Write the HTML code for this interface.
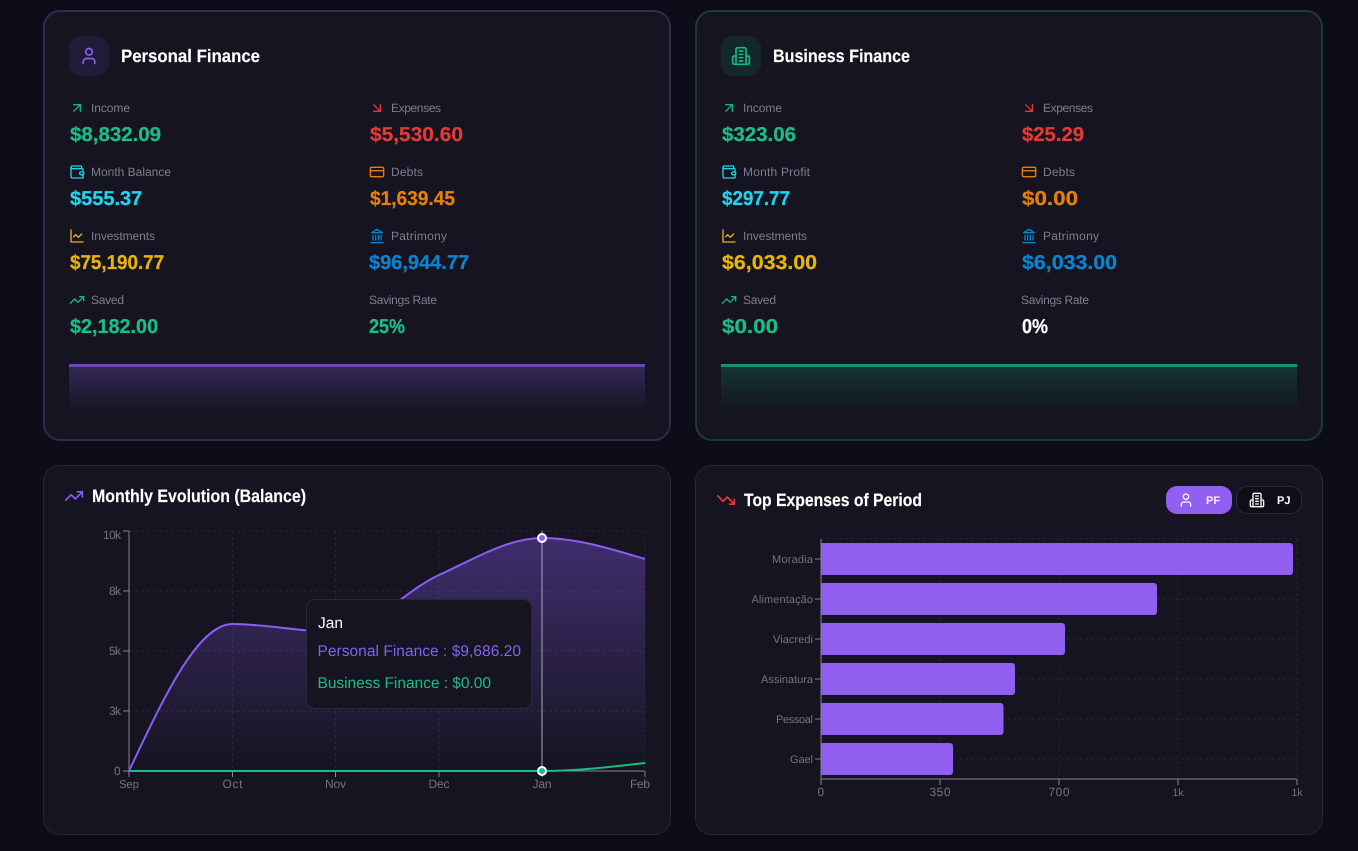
<!DOCTYPE html>
<html lang="en"><head><meta charset="utf-8"><title>Finance Dashboard</title>
<style>
html,body{margin:0;padding:0;background:#0e0c18;width:1358px;height:851px;overflow:hidden}
svg{display:block}
text{font-family:"Liberation Sans",sans-serif;text-rendering:geometricPrecision}
.t{font-size:18px;font-weight:700;fill:#fff;stroke:#fff;stroke-width:.15px}
.l{font-size:12px;fill:#7f7e90}
.v{font-size:20px;font-weight:700;stroke-width:.25px}
.a{font-size:12px;fill:#74737f}
.b{font-size:11px;fill:#74737f}
.i{fill:none;stroke-width:2;stroke-linecap:round;stroke-linejoin:round}
.g{stroke:#262533;stroke-width:1;stroke-dasharray:3 3;fill:none}
.x{stroke:#85848f;stroke-width:1;fill:none}
</style></head><body>
<svg xmlns="http://www.w3.org/2000/svg" width="1358" height="851" viewBox="0 0 1358 851">
<defs>
<linearGradient id="gp" x1="0" y1="0" x2="0" y2="1"><stop offset="0" stop-color="#8b5cf6" stop-opacity=".26"/><stop offset="1" stop-color="#8b5cf6" stop-opacity="0"/></linearGradient>
<linearGradient id="gg" x1="0" y1="0" x2="0" y2="1"><stop offset="0" stop-color="#10b981" stop-opacity=".2"/><stop offset="1" stop-color="#10b981" stop-opacity="0"/></linearGradient>
<linearGradient id="ga" gradientUnits="userSpaceOnUse" x1="0" y1="538" x2="0" y2="771"><stop offset="0" stop-color="#8b5cf6" stop-opacity=".36"/><stop offset="1" stop-color="#8b5cf6" stop-opacity="0"/></linearGradient>
</defs>
<rect width="1358" height="851" fill="#0e0c18"/>

<!-- Personal card -->
<rect x="44" y="11" width="626" height="429" rx="16" fill="#151420" stroke="#32294e" stroke-width="2"/>
<rect x="69" y="36" width="40" height="40" rx="12" fill="#221b37"/>
<svg x="79" y="46" width="20" height="20" viewBox="0 0 24 24" class="i" stroke="#8b5cf6"><path d="M19 21v-2a4 4 0 0 0-4-4H9a4 4 0 0 0-4 4v2"/><circle cx="12" cy="7" r="4"/></svg>
<text class="t" x="121" y="62" textLength="139" lengthAdjust="spacingAndGlyphs">Personal Finance</text>

<svg x="69" y="100" width="16" height="16" viewBox="0 0 24 24" class="i" stroke="#10b981"><path d="M7 7h10v10"/><path d="M7 17 17 7"/></svg>
<text class="l" x="91" y="112" textLength="39">Income</text>
<text class="v" transform="translate(70 141) scale(1.023 1)" fill="#1cbd84" stroke="#1cbd84">$8,832.09</text>
<svg x="369" y="100" width="16" height="16" viewBox="0 0 24 24" class="i" stroke="#e53935"><path d="m7 7 10 10"/><path d="M17 7v10H7"/></svg>
<text class="l" x="391" y="112" textLength="50">Expenses</text>
<text class="v" transform="translate(370 141) scale(1.045 1)" fill="#e53935" stroke="#e53935">$5,530.60</text>

<svg x="69" y="164" width="16" height="16" viewBox="0 0 24 24" class="i" stroke="#22d3ee"><path d="M19 7V4a1 1 0 0 0-1-1H5a2 2 0 0 0 0 4h15a1 1 0 0 1 1 1v4h-3a2 2 0 0 0 0 4h3a1 1 0 0 0 1-1v-2a1 1 0 0 0-1-1"/><path d="M3 5v14a2 2 0 0 0 2 2h15a1 1 0 0 0 1-1v-4"/></svg>
<text class="l" x="91" y="176" textLength="80">Month Balance</text>
<text class="v" transform="translate(70 205)" fill="#22d3ee" stroke="#22d3ee">$555.37</text>
<svg x="369" y="164" width="16" height="16" viewBox="0 0 24 24" class="i" stroke="#e67e0c"><rect x="2" y="5" width="20" height="14" rx="2"/><line x1="2" y1="10" x2="22" y2="10"/></svg>
<text class="l" x="391" y="176" textLength="32">Debts</text>
<text class="v" transform="translate(370 205) scale(.955 1)" fill="#e67e0c" stroke="#e67e0c">$1,639.45</text>

<svg x="69" y="228" width="16" height="16" viewBox="0 0 24 24" class="i" stroke="#eab308"><path d="M3 3v18h18"/><path d="m19 9-5 5-4-4-3 3"/></svg>
<text class="l" x="91" y="240" textLength="64">Investments</text>
<text class="v" transform="translate(70 269) scale(.94 1)" fill="#eab308" stroke="#eab308">$75,190.77</text>
<svg x="369" y="228" width="16" height="16" viewBox="0 0 24 24" class="i" stroke="#0a84d0"><line x1="3" y1="22" x2="21" y2="22"/><line x1="6" y1="18" x2="6" y2="11"/><line x1="10" y1="18" x2="10" y2="11"/><line x1="14" y1="18" x2="14" y2="11"/><line x1="18" y1="18" x2="18" y2="11"/><polygon points="12 2 20 7 4 7"/></svg>
<text class="l" x="391" y="240" textLength="56">Patrimony</text>
<text class="v" transform="translate(369 269)" fill="#0a84d0" stroke="#0a84d0">$96,944.77</text>

<svg x="69" y="292" width="16" height="16" viewBox="0 0 24 24" class="i" stroke="#10b981"><polyline points="22 7 13.5 15.5 8.5 10.5 2 17"/><polyline points="16 7 22 7 22 13"/></svg>
<text class="l" x="91" y="304" textLength="33">Saved</text>
<text class="v" transform="translate(70 333) scale(.99 1)" fill="#1cbd84" stroke="#1cbd84">$2,182.00</text>
<text class="l" x="369" y="304" textLength="68">Savings Rate</text>
<text class="v" transform="translate(369 333) scale(.9 1)" fill="#1cbd84" stroke="#1cbd84">25%</text>

<rect x="69" y="367" width="576" height="46" fill="url(#gp)"/>
<rect x="69" y="364" width="576" height="3" fill="#6c47b5"/>

<!-- Business card -->
<rect x="696" y="11" width="626" height="429" rx="16" fill="#151420" stroke="#1b3b3a" stroke-width="2"/>
<rect x="721" y="36" width="40" height="40" rx="12" fill="#14282b"/>
<svg x="731" y="46" width="20" height="20" viewBox="0 0 24 24" class="i" stroke="#10b981"><path d="M6 22V4a2 2 0 0 1 2-2h8a2 2 0 0 1 2 2v18Z"/><path d="M6 12H4a2 2 0 0 0-2 2v6a2 2 0 0 0 2 2h2"/><path d="M18 12h2a2 2 0 0 1 2 2v6a2 2 0 0 1-2 2h-2"/><path d="M10 6h4"/><path d="M10 10h4"/><path d="M10 14h4"/><path d="M10 18h4"/></svg>
<text class="t" x="773" y="62" textLength="137" lengthAdjust="spacingAndGlyphs">Business Finance</text>

<svg x="721" y="100" width="16" height="16" viewBox="0 0 24 24" class="i" stroke="#10b981"><path d="M7 7h10v10"/><path d="M7 17 17 7"/></svg>
<text class="l" x="743" y="112" textLength="39">Income</text>
<text class="v" transform="translate(722 141) scale(1.024 1)" fill="#1cbd84" stroke="#1cbd84">$323.06</text>
<svg x="1021" y="100" width="16" height="16" viewBox="0 0 24 24" class="i" stroke="#e53935"><path d="m7 7 10 10"/><path d="M17 7v10H7"/></svg>
<text class="l" x="1043" y="112" textLength="50">Expenses</text>
<text class="v" transform="translate(1022 141) scale(1.014 1)" fill="#e53935" stroke="#e53935">$25.29</text>

<svg x="721" y="164" width="16" height="16" viewBox="0 0 24 24" class="i" stroke="#22d3ee"><path d="M19 7V4a1 1 0 0 0-1-1H5a2 2 0 0 0 0 4h15a1 1 0 0 1 1 1v4h-3a2 2 0 0 0 0 4h3a1 1 0 0 0 1-1v-2a1 1 0 0 0-1-1"/><path d="M3 5v14a2 2 0 0 0 2 2h15a1 1 0 0 0 1-1v-4"/></svg>
<text class="l" x="743" y="176" textLength="67">Month Profit</text>
<text class="v" transform="translate(722 205) scale(.94 1)" fill="#22d3ee" stroke="#22d3ee">$297.77</text>
<svg x="1021" y="164" width="16" height="16" viewBox="0 0 24 24" class="i" stroke="#e67e0c"><rect x="2" y="5" width="20" height="14" rx="2"/><line x1="2" y1="10" x2="22" y2="10"/></svg>
<text class="l" x="1043" y="176" textLength="32">Debts</text>
<text class="v" transform="translate(1022 205) scale(1.12 1)" fill="#e67e0c" stroke="#e67e0c">$0.00</text>

<svg x="721" y="228" width="16" height="16" viewBox="0 0 24 24" class="i" stroke="#eab308"><path d="M3 3v18h18"/><path d="m19 9-5 5-4-4-3 3"/></svg>
<text class="l" x="743" y="240" textLength="64">Investments</text>
<text class="v" transform="translate(722 269) scale(1.068 1)" fill="#eab308" stroke="#eab308">$6,033.00</text>
<svg x="1021" y="228" width="16" height="16" viewBox="0 0 24 24" class="i" stroke="#0a84d0"><line x1="3" y1="22" x2="21" y2="22"/><line x1="6" y1="18" x2="6" y2="11"/><line x1="10" y1="18" x2="10" y2="11"/><line x1="14" y1="18" x2="14" y2="11"/><line x1="18" y1="18" x2="18" y2="11"/><polygon points="12 2 20 7 4 7"/></svg>
<text class="l" x="1043" y="240" textLength="56">Patrimony</text>
<text class="v" transform="translate(1022 269) scale(1.068 1)" fill="#0a84d0" stroke="#0a84d0">$6,033.00</text>

<svg x="721" y="292" width="16" height="16" viewBox="0 0 24 24" class="i" stroke="#10b981"><polyline points="22 7 13.5 15.5 8.5 10.5 2 17"/><polyline points="16 7 22 7 22 13"/></svg>
<text class="l" x="743" y="304" textLength="33">Saved</text>
<text class="v" transform="translate(722 333) scale(1.12 1)" fill="#1cbd84" stroke="#1cbd84">$0.00</text>
<text class="l" x="1021" y="304" textLength="68">Savings Rate</text>
<text class="v" transform="translate(1022 333) scale(.9 1)" fill="#ffffff" stroke="#ffffff">0%</text>

<rect x="721" y="367" width="576" height="46" fill="url(#gg)"/>
<rect x="721" y="364" width="576" height="3" fill="#17936e"/>

<!-- Monthly evolution card -->
<rect x="43.5" y="465.5" width="627" height="369" rx="16" fill="#151420" stroke="#272634"/>
<svg x="64" y="486" width="20" height="20" viewBox="0 0 24 24" class="i" stroke="#8b5cf6"><polyline points="22 7 13.5 15.5 8.5 10.5 2 17"/><polyline points="16 7 22 7 22 13"/></svg>
<text class="t" x="92" y="502" textLength="214" lengthAdjust="spacingAndGlyphs">Monthly Evolution (Balance)</text>

<path class="g" d="M129 531H645M129 591H645M129 651H645M129 711H645M232.5 531V771M335.5 531V771M439 531V771M542 531V771M645 531V771"/>
<path d="M129 771C163.5 697.5 198 624 232.5 624C267 624 301 632 335.5 632C370 632 404.5 590.7 439 575C473.3 559.4 507.7 538 542 538C576.3 538 610.7 548.7 645 559V771H129Z" fill="url(#ga)"/>
<path class="x" d="M129 531V771M123 531H129M123 591H129M123 651H129M123 711H129M123 771H129M129 771H645M129 771V777M232.5 771V777M335.5 771V777M439 771V777M542 771V777M645 771V777"/>
<path d="M129 771C163.5 697.5 198 624 232.5 624C267 624 301 632 335.5 632C370 632 404.5 590.7 439 575C473.3 559.4 507.7 538 542 538C576.3 538 610.7 548.7 645 559" fill="none" stroke="#8b5cf6" stroke-width="2"/>
<path d="M129 771H542C576.3 771 610.7 767 645 763" fill="none" stroke="#1cbd84" stroke-width="2"/>
<line x1="542" y1="531" x2="542" y2="771" stroke="#a9a8b6" stroke-width="1"/>
<circle cx="542" cy="538" r="4" fill="#8b5cf6" stroke="#fff" stroke-width="2"/>
<circle cx="542" cy="771" r="4" fill="#1cbd84" stroke="#fff" stroke-width="2"/>

<text class="a" x="103" y="539" textLength="18">10k</text>
<text class="a" x="109" y="595" textLength="12">8k</text>
<text class="a" x="109" y="655" textLength="12">5k</text>
<text class="a" x="109" y="715" textLength="12">3k</text>
<text class="a" x="114" y="775">0</text>
<text class="a" x="119" y="788" font-size="11.5" style="font-size:11.5px" textLength="20">Sep</text>
<text class="a" x="222.5" y="788" textLength="20">Oct</text>
<text class="a" x="325" y="788" textLength="21">Nov</text>
<text class="a" x="428.5" y="788" textLength="21">Dec</text>
<text class="a" x="532.5" y="788" textLength="19">Jan</text>
<text class="a" x="630" y="788" textLength="20">Feb</text>

<rect x="306.5" y="599.5" width="225" height="109" rx="8" fill="#151420" stroke="#292838"/>
<text x="318" y="628" font-size="15.5" fill="#ffffff" textLength="25">Jan</text>
<text x="317.5" y="656" font-size="15.5" fill="#8562f5" textLength="203.5">Personal Finance : $9,686.20</text>
<text x="317.5" y="688" font-size="15.5" fill="#1cbd84" textLength="173.5">Business Finance : $0.00</text>

<!-- Top expenses card -->
<rect x="695.5" y="465.5" width="627" height="369" rx="16" fill="#151420" stroke="#272634"/>
<svg x="716" y="490" width="20" height="20" viewBox="0 0 24 24" class="i" stroke="#e53935"><polyline points="22 17 13.5 8.5 8.5 13.5 2 7"/><polyline points="16 17 22 17 22 11"/></svg>
<text class="t" x="744" y="506" textLength="178" lengthAdjust="spacingAndGlyphs">Top Expenses of Period</text>

<rect x="1166" y="486" width="66" height="28" rx="11" fill="#915ff0"/>
<svg x="1178" y="492" width="16" height="16" viewBox="0 0 24 24" class="i" stroke="#ffffff"><path d="M19 21v-2a4 4 0 0 0-4-4H9a4 4 0 0 0-4 4v2"/><circle cx="12" cy="7" r="4"/></svg>
<text x="1206" y="504" font-size="11" font-weight="700" fill="#f2eefe">PF</text>
<rect x="1236.5" y="486.5" width="65" height="27" rx="10.5" fill="#0f0e18" stroke="#2a2937"/>
<svg x="1249" y="492" width="16" height="16" viewBox="0 0 24 24" class="i" stroke="#ffffff"><path d="M6 22V4a2 2 0 0 1 2-2h8a2 2 0 0 1 2 2v18Z"/><path d="M6 12H4a2 2 0 0 0-2 2v6a2 2 0 0 0 2 2h2"/><path d="M18 12h2a2 2 0 0 1 2 2v6a2 2 0 0 1-2 2h-2"/><path d="M10 6h4"/><path d="M10 10h4"/><path d="M10 14h4"/><path d="M10 18h4"/></svg>
<text x="1277" y="504" font-size="11" font-weight="700" fill="#ffffff">PJ</text>

<path class="g" d="M821 539H1297M821 559H1297M821 599H1297M821 639H1297M821 679H1297M821 719H1297M821 759H1297M940 539V779M1059 539V779M1178 539V779M1297 539V779"/>
<path d="M821 543H1290a3 3 0 0 1 3 3V572a3 3 0 0 1-3 3H821Z" fill="#915ff0"/>
<path d="M821 583H1154a3 3 0 0 1 3 3V612a3 3 0 0 1-3 3H821Z" fill="#915ff0"/>
<path d="M821 623H1062a3 3 0 0 1 3 3V652a3 3 0 0 1-3 3H821Z" fill="#915ff0"/>
<path d="M821 663H1012a3 3 0 0 1 3 3V692a3 3 0 0 1-3 3H821Z" fill="#915ff0"/>
<path d="M821 703H1000.5a3 3 0 0 1 3 3V732a3 3 0 0 1-3 3H821Z" fill="#915ff0"/>
<path d="M821 743H950a3 3 0 0 1 3 3V772a3 3 0 0 1-3 3H821Z" fill="#915ff0"/>
<path class="x" d="M821 539V779M815 559H821M815 599H821M815 639H821M815 679H821M815 719H821M815 759H821M821 779H1297M821 779V785M940 779V785M1059 779V785M1178 779V785M1297 779V785"/>

<text class="b" x="772" y="563" textLength="41">Moradia</text>
<text class="b" x="751.5" y="603" textLength="61.5">Alimentação</text>
<text class="b" x="773" y="643" textLength="40">Viacredi</text>
<text class="b" x="761" y="683" textLength="52">Assinatura</text>
<text class="b" x="776" y="723" textLength="37">Pessoal</text>
<text class="b" x="790" y="763" textLength="23">Gael</text>

<text class="a" x="817.5" y="796">0</text>
<text class="a" x="929.5" y="796" textLength="21">350</text>
<text class="a" x="1048.5" y="796" textLength="21">700</text>
<text class="a" x="1172.5" y="796" style="font-size:10.5px">1k</text>
<text class="a" x="1291.5" y="796" style="font-size:10.5px">1k</text>
</svg>
</body></html>
